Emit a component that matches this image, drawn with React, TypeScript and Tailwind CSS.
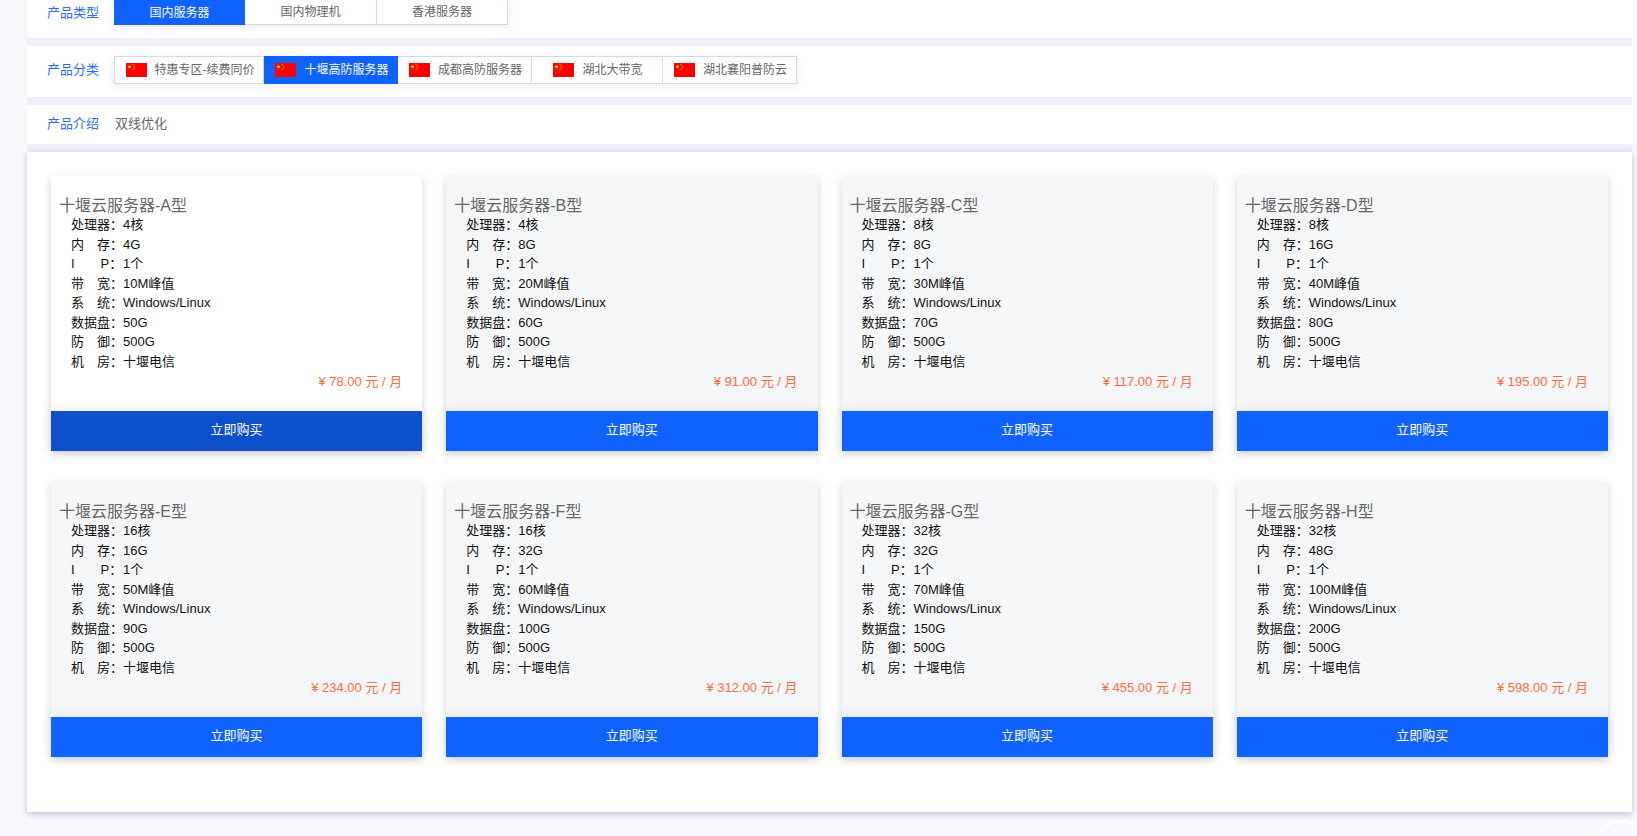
import React from "react";

const font = { fontFamily: '"Liberation Sans","Noto Sans CJK SC",sans-serif' };

function Flag() {
  return (
    <svg width="21" height="14" viewBox="0 0 30 20" className="shrink-0">
      <rect width="30" height="20" fill="#fe0000" />
      <polygon points="5,2 5.9,4.2 8.2,4.3 6.4,5.8 7,8 5,6.8 3,8 3.6,5.8 1.8,4.3 4.1,4.2" fill="#ffde00" />
      <circle cx="10" cy="2.2" r="0.8" fill="#ffde00" />
      <circle cx="12" cy="4.2" r="0.8" fill="#ffde00" />
      <circle cx="12" cy="7" r="0.8" fill="#ffde00" />
      <circle cx="10" cy="9" r="0.8" fill="#ffde00" />
    </svg>
  );
}

const types = [
  { t: "国内服务器", w: "w-[131px]", a: true },
  { t: "国内物理机", w: "w-[132px]", a: false },
  { t: "香港服务器", w: "w-[131px]", a: false },
];
const cats = [
  { t: "特惠专区-续费同价", w: "w-[150px]", a: false },
  { t: "十堰高防服务器", w: "w-[134px]", a: true },
  { t: "成都高防服务器", w: "w-[134px]", a: false },
  { t: "湖北大带宽", w: "w-[131px]", a: false },
  { t: "湖北襄阳普防云", w: "w-[134px]", a: false },
];

const plans = [
  ["A", "4", "4", "10", "50", "78.00"],
  ["B", "4", "8", "20", "60", "91.00"],
  ["C", "8", "8", "30", "70", "117.00"],
  ["D", "8", "16", "40", "80", "195.00"],
  ["E", "16", "16", "50", "90", "234.00"],
  ["F", "16", "32", "60", "100", "312.00"],
  ["G", "32", "32", "70", "150", "455.00"],
  ["H", "32", "48", "100", "200", "598.00"],
];

function Card({ p, hover }: { p: string[]; hover: boolean }) {
  const rows: [string, string][] = [
    ["处理器：", p[1] + "核"],
    ["内　存：", p[2] + "G"],
    ["I　　P：", "1个"],
    ["带　宽：", p[3] + "M峰值"],
    ["系　统：", "Windows/Linux"],
    ["数据盘：", p[4] + "G"],
    ["防　御：", "500G"],
    ["机　房：", "十堰电信"],
  ];
  return (
    <div className={`flex flex-col h-[275px] shadow-[0_3px_8px_rgba(60,70,110,0.22)] ${hover ? "bg-white" : "bg-[#f5f6f8]"}`}>
      <div className="flex-1 pt-[20px]">
        <div className="pl-[8px] text-[16px] leading-[19px] text-[#666]">十堰云服务器-{p[0]}型</div>
        <div className="pl-[20px] text-[13px] leading-[19.5px] text-[#111]">
          {rows.map(([l, v]) => (
            <div key={l} className="flex">
              <span className="w-[52px] shrink-0 whitespace-pre">{l}</span>
              <span>{v}</span>
            </div>
          ))}
        </div>
        <div className="mt-[1px] pr-[20px] text-right text-[13px] leading-[19.5px] text-[#ff6a3d]">¥ {p[5]} 元 / 月</div>
      </div>
      <div className={`h-[40px] pb-[2px] flex items-center justify-center text-[13px] text-white shadow-[0_-2px_12px_rgba(60,70,110,0.08)] ${hover ? "bg-[#0d50cb]" : "bg-[#0f62fe]"}`}>
        立即购买
      </div>
    </div>
  );
}

export default function App() {
  return (
    <div style={font} className="relative h-[836px] overflow-hidden bg-[#f7f8fb]">
      <div className="ml-[27px] w-[1605px]">
        <div className="h-[38px] bg-white flex items-start pl-[20px]">
          <div className="w-[67px] h-[25px] flex items-center text-[13px] text-[#2a6bff]">产品类型</div>
          <div className="flex shadow-[0_2px_8px_rgba(60,70,110,0.1)]">
            {types.map((x) => (
              <div
                key={x.t}
                className={`${x.w} h-[25px] flex items-center justify-center text-[12px] ${
                  x.a ? "bg-[#0f62fe] text-white" : "bg-white text-[#666] border-r border-b border-[#d3d9ea]"
                }`}
              >
                {x.t}
              </div>
            ))}
          </div>
        </div>
        <div className="h-[8px] bg-[#eef0f8]" />
        <div className="h-[51px] bg-white flex items-center pl-[20px] pb-[3px]">
          <div className="w-[67px] text-[13px] text-[#2a6bff]">产品分类</div>
          <div className="flex h-[28px] shadow-[0_2px_8px_rgba(60,70,110,0.1)]">
            {cats.map((x) => (
              <div
                key={x.t}
                className={`${x.w} flex items-center justify-center gap-[8px] pl-[2px] text-[12px] ${
                  x.a ? "bg-[#0f62fe] text-white" : "bg-white text-[#666] border border-l-0 first:border-l border-[#d3d9ea]"
                }`}
              >
                <Flag />
                {x.t}
              </div>
            ))}
          </div>
        </div>
        <div className="h-[8px] bg-[#eef0f8]" />
        <div className="h-[39px] bg-white flex items-center pl-[20px] pb-[1px]">
          <div className="w-[68px] text-[13px] text-[#2a6bff]">产品介绍</div>
          <div className="text-[13px] text-[#666]">双线优化</div>
        </div>
        <div className="h-[8px] bg-[#eef0f8]" />
        <div className="h-[660px] bg-white px-6 pt-6 shadow-[0_2px_6px_rgba(60,70,110,0.3)]">
          <div className="grid grid-cols-4 gap-x-6 gap-y-[31px]">
            {plans.map((p, i) => (
              <Card key={p[0]} p={p} hover={i === 0} />
            ))}
          </div>
        </div>
      </div>
      <div className="absolute left-[1595px] top-[820px] w-[55px] h-[55px] rounded-full border-2 border-white" />
    </div>
  );
}
